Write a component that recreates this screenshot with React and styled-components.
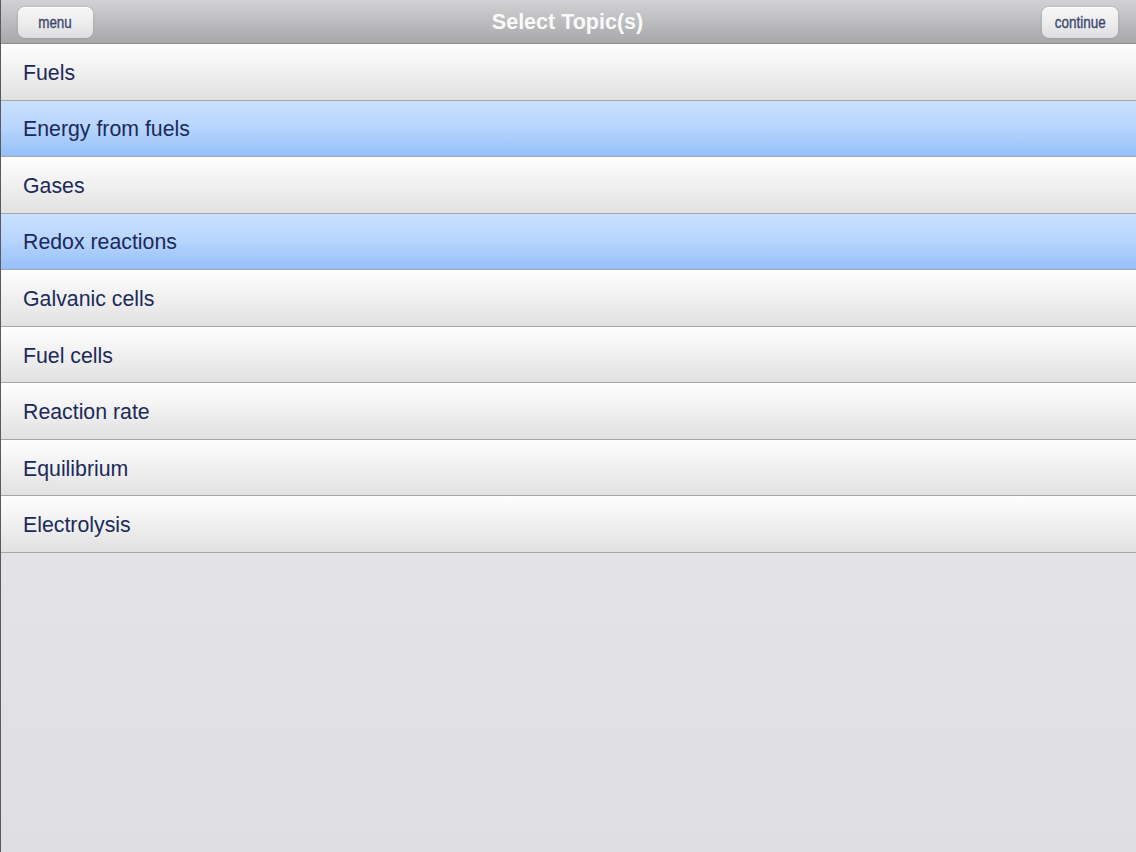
import React, { useState } from 'react';
import styled, { createGlobalStyle } from 'styled-components';

const topics = [
  'Fuels',
  'Energy from fuels',
  'Gases',
  'Redox reactions',
  'Galvanic cells',
  'Fuel cells',
  'Reaction rate',
  'Equilibrium',
  'Electrolysis',
];

export default function App() {
  const [selected, setSelected] = useState(['Energy from fuels', 'Redox reactions']);

  const toggle = (topic) => {
    setSelected((prev) =>
      prev.includes(topic) ? prev.filter((t) => t !== topic) : [...prev, topic]
    );
  };

  return (
    <>
      <GlobalStyle />
      <Screen>
        <NavBar>
          <BarButton $width={75}><Narrow>menu</Narrow></BarButton>
          <Title>Select Topic(s)</Title>
          <BarButton $width={76}><Narrow>continue</Narrow></BarButton>
        </NavBar>
        <List>
          {topics.map((topic) => (
            <Row key={topic} $selected={selected.includes(topic)} onClick={() => toggle(topic)}>
              {topic}
            </Row>
          ))}
        </List>
      </Screen>
    </>
  );
}

const GlobalStyle = createGlobalStyle`
  html, body {
    margin: 0;
    padding: 0;
    height: 100%;
  }
  #root {
    height: 100%;
  }
  body {
    font-family: "Liberation Sans", Arial, sans-serif;
  }
`;

const Screen = styled.div`
  height: 852px;
  display: flex;
  flex-direction: column;
  background: linear-gradient(to bottom, #e9e9ea 0%, #e4e4e6 60%, #dfdfe1 100%);
  border-left: 1px solid #5a5a5c;
  box-sizing: border-box;
  overflow: hidden;
`;

const NavBar = styled.div`
  height: 44px;
  flex-shrink: 0;
  display: flex;
  align-items: center;
  justify-content: space-between;
  padding: 0 18px 0 17px;
  background: linear-gradient(to bottom, #d2d2d4 0%, #bdbdbf 50%, #a8a8aa 100%);
  border-bottom: 1px solid #8e8e90;
  box-sizing: border-box;
`;

const Title = styled.div`
  color: #fafafa;
  font-size: 21.5px;
  font-weight: bold;
  margin-top: 1px;
`;

const BarButton = styled.button`
  width: ${(p) => p.$width}px;
  height: 31px;
  padding: 0;
  margin-top: 2px;
  border: none;
  border-radius: 7px;
  display: flex;
  align-items: center;
  justify-content: center;
  background: linear-gradient(to bottom, #f7f7f7 0%, #ececed 55%, #dddddf 100%);
  box-shadow: 0 0 2px rgba(0, 0, 0, 0.22), inset 0 1px 0 rgba(255, 255, 255, 0.9);
  cursor: pointer;
`;

const Narrow = styled.span`
  display: inline-block;
  transform: scaleX(0.84);
  color: #3c4870;
  font-family: "Liberation Sans", Arial, sans-serif;
  font-size: 16px;
  font-weight: normal;
  -webkit-text-stroke: 0.35px #3c4870;
`;

const List = styled.div`
  display: flex;
  flex-direction: column;
`;

const Row = styled.div`
  height: 56.56px;
  box-sizing: border-box;
  display: flex;
  align-items: center;
  padding: 3px 0 0 22px;
  border-bottom: 1px solid #a7a7a9;
  font-size: 21.3px;
  color: #1b2a5a;
  cursor: pointer;
  background: ${(p) =>
    p.$selected
      ? 'linear-gradient(to bottom, #cae1fe 0%, #b6d4fd 50%, #96c0fa 100%)'
      : 'linear-gradient(to bottom, #fefefe 0%, #f3f3f3 40%, #e1e1e2 100%)'};
`;
